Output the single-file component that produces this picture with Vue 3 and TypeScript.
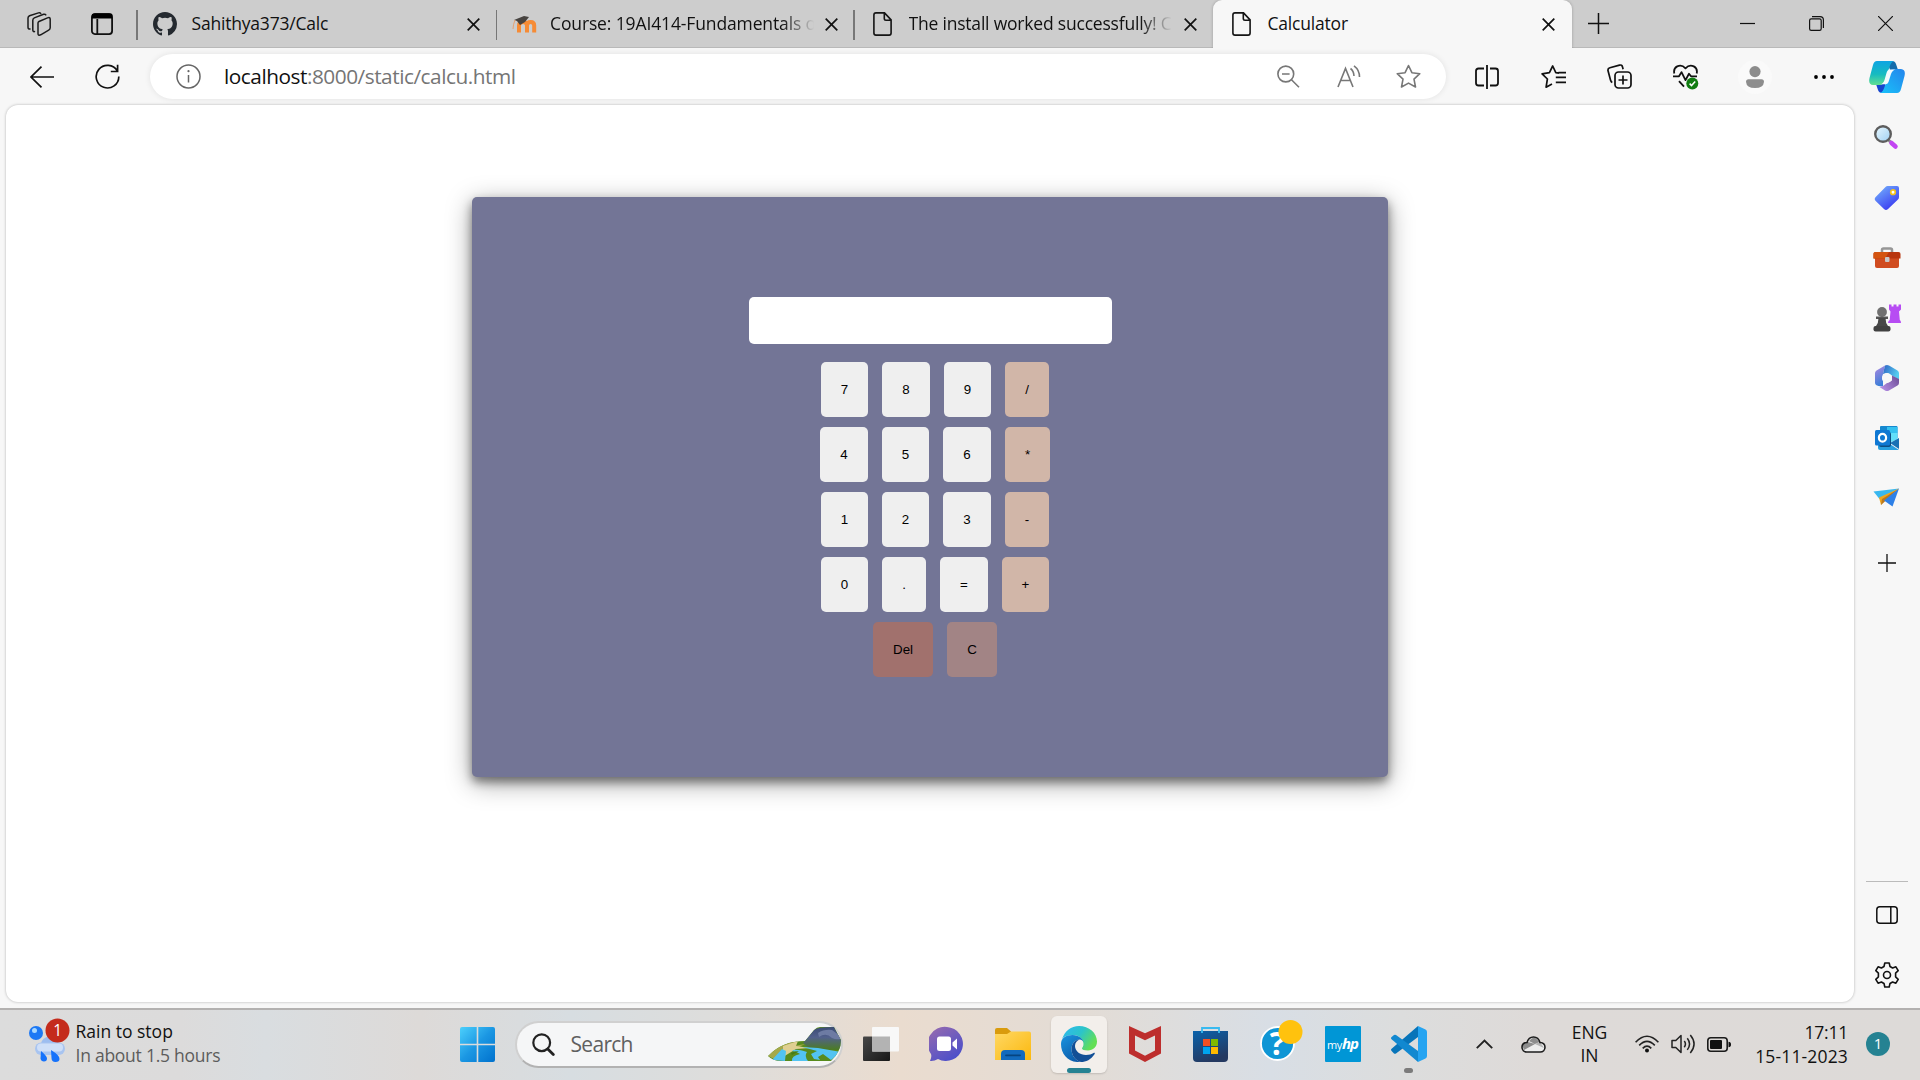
<script setup lang="ts">
import { ref } from 'vue'

type Key = { label: string; kind?: string; size: string }

const display = ref('')
const rows: Key[][] = [
  [{ label: '7', size: 'w47' }, { label: '8', size: 'w48' }, { label: '9', size: 'w47' }, { label: '/', kind: 'op', size: 'w44' }],
  [{ label: '4', size: 'w48' }, { label: '5', size: 'w47' }, { label: '6', size: 'w48' }, { label: '*', kind: 'op', size: 'w45' }],
  [{ label: '1', size: 'w47' }, { label: '2', size: 'w47' }, { label: '3', size: 'w48' }, { label: '-', kind: 'op', size: 'w44' }],
  [{ label: '0', size: 'w47' }, { label: '.', size: 'w44' }, { label: '=', size: 'w48' }, { label: '+', kind: 'op', size: 'w47' }],
  [{ label: 'Del', kind: 'del', size: 'w60' }, { label: 'C', kind: 'clear', size: 'w50' }],
]

function press(label: string) {
  if (label === 'C') display.value = ''
  else if (label === 'Del') display.value = display.value.slice(0, -1)
  else if (label !== '=') display.value += label
}
</script>

<template>
  <div class="screen">
    <header class="tabstrip">
      <svg class="ic workspaces" width="24" height="24" viewBox="0 0 24 24" fill="none" stroke="#1b1b1b" stroke-width="1.5" stroke-linejoin="round" stroke-linecap="round">
        <path d="M12 9.500 20.500 5.900q2.700-1 2.700 1.400v8.500q0 1.600-1.500 2.400l-8 4.600q-2.700 1.200-2.700-1.400V11q0-1 1-1.500z" />
        <path d="M7.500 19.600q-1.700.3-1.700-1.800V8.200q0-1.600 1.500-2.300L16.600 2.300q1.600-.5 2.200.6" />
        <path d="M3 17q-2 .2-2-1.800V6q0-1.500 1.500-2.200L11.500.9q1.500-.4 2.200.5" />
      </svg>
      <svg class="ic tabactions" width="22" height="22" viewBox="0 0 22 22" fill="none" stroke="#111" stroke-width="1.8">
        <rect x=".9" y=".9" width="20.200" height="20.200" rx="3" /><path d="M1 1h20v4.500H1z" fill="#000" stroke="none" /><path d="M6.300 6v15" />
      </svg>
      <i class="sep s1" />
      <div class="tab t1">
        <svg width="24" height="24" viewBox="0 0 16 16"><path fill="#24292f" d="M8 0C3.580 0 0 3.580 0 8c0 3.540 2.290 6.530 5.470 7.590.4.070.55-.17.55-.38 0-.19-.01-.82-.01-1.490-2.010.37-2.530-.49-2.690-.94-.09-.23-.48-.94-.82-1.130-.28-.15-.68-.52-.01-.53.63-.01 1.080.58 1.230.82.72 1.210 1.870.87 2.330.66.070-.52.28-.87.51-1.070-1.780-.2-3.640-.89-3.640-3.950 0-.87.31-1.590.82-2.150-.08-.2-.36-1.020.08-2.120 0 0 .67-.21 2.200.82a7.600 7.600 0 0 1 4 0c1.530-1.040 2.200-.82 2.200-.82.44 1.100.16 1.920.08 2.120.51.56.82 1.270.82 2.150 0 3.070-1.870 3.750-3.650 3.950.29.25.54.73.54 1.480 0 1.070-.01 1.930-.01 2.200 0 .21.15.46.55.38A8 8 0 0 0 16 8c0-4.420-3.580-8-8-8z" /></svg>
        <span class="title a">Sahithya373/Calc</span>
        <svg class="x" width="13" height="13" viewBox="0 0 13 13"><path d="m.7.7 11.600 11.600M12.300.7.7 12.300" stroke="#111" stroke-width="1.700" /></svg>
      </div>
      <i class="sep" />
      <div class="tab t2">
        <svg width="25" height="24" viewBox="0 0 25 24">
          <g fill="none" stroke="#f68b35" stroke-width="4"><path d="M7 20.500v-7q0-3.500 4-3.500t4 3.500v7M15 13.500q0-3.500 3.600-3.500t3.600 3.500v7" /></g>
          <path d="M2 8 12 4l5 1-4 5-5 3-3-4z" fill="#474340" /><path d="M3 8q-2 5-2 9" stroke="#e5a273" fill="none" />
        </svg>
        <span class="title b fade">Course: 19AI414-Fundamentals o</span>
        <svg class="x" width="13" height="13" viewBox="0 0 13 13"><path d="m.7.7 11.600 11.600M12.300.7.7 12.300" stroke="#111" stroke-width="1.700" /></svg>
      </div>
      <i class="sep" />
      <div class="tab t3">
        <svg width="19" height="24" viewBox="0 0 19 24" fill="none" stroke="#151515" stroke-width="1.600"><path d="M3 .9h8.500l6.600 7V21q0 2.100-2 2.100H3q-2.100 0-2.100-2.100V3Q.9.9 3 .9zM11.300 1v5.500q0 1.700 1.700 1.700h5" /></svg>
        <span class="title c fade">The install worked successfully! C</span>
        <svg class="x" width="13" height="13" viewBox="0 0 13 13"><path d="m.7.7 11.600 11.600M12.300.7.7 12.300" stroke="#111" stroke-width="1.700" /></svg>
      </div>
      <div class="tab t4">
        <svg width="19" height="24" viewBox="0 0 19 24" fill="none" stroke="#151515" stroke-width="1.600"><path d="M3 .9h8.500l6.600 7V21q0 2.100-2 2.100H3q-2.100 0-2.100-2.100V3Q.9.9 3 .9zM11.300 1v5.500q0 1.700 1.700 1.700h5" /></svg>
        <span class="title d">Calculator</span>
        <svg class="x" width="13" height="13" viewBox="0 0 13 13"><path d="m.7.7 11.600 11.600M12.300.7.7 12.300" stroke="#111" stroke-width="1.700" /></svg>
      </div>
      <svg class="ic newtab" width="21" height="21" viewBox="0 0 21 21"><path d="M10.500 0v21M0 10.500h21" stroke="#111" stroke-width="1.500" /></svg>
      <div class="winbtns">
        <svg width="15" height="15" viewBox="0 0 15 15"><path d="M0 7.500h15" stroke="#111" stroke-width="1.200" /></svg>
        <svg width="15" height="15" viewBox="0 0 15 15" fill="none" stroke="#111" stroke-width="1.200"><rect x=".6" y="2.800" width="11.600" height="11.600" rx="1.600" /><path d="M3 .6h8q3.400 0 3.400 3.400v8" /></svg>
        <svg width="15" height="15" viewBox="0 0 15 15"><path d="m0 0 15 15M15 0 0 15" stroke="#111" stroke-width="1.200" /></svg>
      </div>
    </header>

    <nav class="toolbar">
      <svg class="back" width="24" height="22" viewBox="0 0 24 22" fill="none" stroke="#111" stroke-width="1.700"><path d="M24 11H1M11.500.6 1 11l10.500 10.400" /></svg>
      <svg class="reload" width="25" height="25" viewBox="0 0 25 25" fill="none" stroke="#111" stroke-width="1.700"><path d="M22.300 7A11.300 11.300 0 1 0 23.800 12.500M22.600.8v6.700h-6.800" /></svg>
      <div class="address">
        <svg width="25" height="25" viewBox="0 0 25 25" fill="none" stroke="#666" stroke-width="1.500"><circle cx="12.500" cy="12.500" r="11.500" /><path d="M12.500 11v7.500" /><circle cx="12.500" cy="7.200" r="1.100" fill="#666" stroke="none" /></svg>
        <span class="url"><b>localhost</b>:8000/static/calcu.html</span>
        <svg class="zoomout" width="23" height="23" viewBox="0 0 23 23" fill="none" stroke="#777" stroke-width="1.600"><circle cx="8.800" cy="9" r="7.900" /><path d="m14.500 14.700 7.500 7.500M5 9h7.600" /></svg>
        <svg class="aloud" width="24" height="24" viewBox="0 0 24 24" fill="none" stroke="#777" stroke-width="1.600"><path d="M1 22 8.500 3.500 16 22M3.700 15.500h9.600M13.500 3.500q3.300 2.500 3.500 7.500M17 .8q5.500 4 5.500 11.200" /></svg>
        <svg width="25" height="25" viewBox="0 0 25 25" fill="none" stroke="#777" stroke-width="1.600" stroke-linejoin="round"><path d="m12.500 1.500 3.400 7.200 7.900 1-5.800 5.400 1.500 7.900-7-3.900-7 3.900L7 15.100 1.200 9.700l7.900-1z" /></svg>
      </div>
      <svg class="split" width="24" height="24" viewBox="0 0 24 24" fill="none" stroke="#111" stroke-width="1.800"><path d="M9 3.500H3.500Q1 3.500 1 6v12q0 2.500 2.500 2.500H9M15 3.500h5.500Q23 3.500 23 6v12q0 2.500-2.500 2.500H15M12 0v24" /></svg>
      <svg class="favs" width="25" height="25" viewBox="0 0 25 25" fill="none" stroke="#111" stroke-width="1.700" stroke-linejoin="round"><path d="M18 9.200l-3.200-.5L11.700 2 8.400 8.700l-7.300 1.100 5.300 5.200-1.300 8.200L11 20.100M14.800 13.300H25M17.500 8.700H25M14.800 18.300H25" /></svg>
      <svg class="coll" width="25" height="25" viewBox="0 0 25 25" fill="none" stroke="#111" stroke-width="1.700"><rect x="8" y="8" width="16" height="16" rx="3.500" /><path d="M16 11.500v9M11.500 16h9M5.300 18.500q-1.300-.6-1.800-2.500L1.100 7q-.7-2.500 1.800-3.200l9.600-2.700q2.400-.6 3 1.800l.6 2.300" /></svg>
      <svg class="heart" width="26" height="26" viewBox="0 0 26 26" fill="none" stroke="#111" stroke-width="1.800" stroke-linejoin="round"><path d="M1.300 9.500Q.2 4.500 4.200 2.400 8.800.3 12.500 4.300 16.200.3 20.800 2.400q4 2.100 2.900 7.100M0 12.300h6l2.500-4.200 4 8 3.500-6.300 2 2.500h6M6 17.200l5 5.500" /><circle cx="19.300" cy="19.500" r="6" fill="#107c10" stroke="none" /><path d="m16.600 19.600 2 2 3.600-4" stroke="#fff" stroke-width="1.500" /></svg>
      <div class="profile"><svg width="18" height="22" viewBox="0 0 18 22" fill="#8d8d8d"><circle cx="9" cy="5.600" r="5.600" /><path d="M2.500 13.200h13Q18 13.200 18 15.700 17.500 22 9 22T0 15.700q0-2.500 2.500-2.500z" /></svg></div>
      <svg class="dots" width="20" height="4" viewBox="0 0 20 4"><circle cx="2" cy="2" r="1.900" /><circle cx="10" cy="2" r="1.900" /><circle cx="18" cy="2" r="1.900" /></svg>
      <svg class="copilot" width="36" height="32" viewBox="0 0 36 32">
        <defs>
          <linearGradient id="cpA" x1="0" y1="0" x2="0" y2="1"><stop offset="0" stop-color="#0fa4e3" /><stop offset=".55" stop-color="#16bbc0" /><stop offset="1" stop-color="#62df91" /></linearGradient>
          <linearGradient id="cpB" x1="1" y1="0" x2="0" y2="1"><stop offset="0" stop-color="#2485ec" /><stop offset="1" stop-color="#19c2fa" /></linearGradient>
        </defs>
        <path d="M18 0h5q3 0 4 3l2 6h-8z" fill="#146cab" /><path d="M18 32h-5q-3 0-4-3l-2-6 9-1z" fill="#1645ce" />
        <path d="M8 0h17q-3 1-4.500 6L16 20q-1.500 4-5 4H4q-5-.5-3.500-7L4 4q1-4 4-4z" fill="url(#cpA)" />
        <path d="M28 32H11q3-1 4.500-6L20 12q1.500-4 5-4h7q5 .5 3.500 7L32 28q-1 4-4 4z" fill="url(#cpB)" />
        <path d="M20.500 8.500h6q-3 .5-4.500 4.500l-2.500 8q-.9 2.300-3 2.300H11q3.300-.3 4.500-4.300l2-7q1-3.500 3-3.500z" fill="#f3fafd" />
      </svg>
    </nav>

    <div class="body">
      <main class="page">
        <section class="card">
          <input v-model="display" class="display" aria-label="Result" readonly />
          <div v-for="(row, r) in rows" :key="r" class="row">
            <button v-for="k in row" :key="k.label" class="key" :class="[k.kind, k.size]" @click="press(k.label)">{{ k.label }}</button>
          </div>
        </section>
      </main>
      <aside class="sidebar">
        <div class="cell"><svg width="28" height="28" viewBox="0 0 28 28"><defs><linearGradient id="sg" x2="1" y2="1"><stop stop-color="#e9f8ff" /><stop offset="1" stop-color="#9fd0f2" /></linearGradient></defs><path d="m15.500 17 3 3" stroke="#8b8b8b" stroke-width="3" /><path d="m18.500 20 4 3.500" stroke="#c245f2" stroke-width="4.500" stroke-linecap="round" /><circle cx="10" cy="11" r="7.800" fill="url(#sg)" stroke="#5d5d5d" stroke-width="2.400" /></svg></div>
        <div class="cell"><svg width="28" height="28" viewBox="0 0 28 28"><defs><linearGradient id="tg" x2=".7" y2="1"><stop stop-color="#78b9fd" /><stop offset="1" stop-color="#3838f1" /></linearGradient></defs><path d="M14.500 2H24q2 0 2 2v9q0 1.500-1 2.500L15 25q-2 2-4 0L2.700 17q-2-2 0-4L12.500 3q1-1 2-1z" fill="url(#tg)" /><circle cx="20" cy="8.200" r="2.300" fill="#fff" stroke="#f5c21b" stroke-width="1.700" /></svg></div>
        <div class="cell"><svg width="28" height="28" viewBox="0 0 28 28"><path d="M9 9V6q0-1.500 1.500-1.500h7Q19 4.500 19 6v3" fill="none" stroke="#969696" stroke-width="2.500" /><path d="M2 14h24v8q0 2-2 2H4q-2 0-2-2z" fill="#d04c20" /><path d="M.5 10q0-2 2-2h23q2 0 2 2v4.500H.5z" fill="#b8360f" /><path d="M.5 9.500q0-1.500 2-1.500H16L12 14.500H.5z" fill="#d4540f" /><rect x="12" y="13" width="4.500" height="5" rx="1" fill="#c8c8c8" /></svg></div>
        <div class="cell"><svg width="28" height="28" viewBox="0 0 28 28"><path d="M16 .5h2.500v2h2v-2h3v2h2v-2H28v5l-2 2 .8 8.500q1.200.7 1.200 3H15q0-2 1.700-3L17.500 7.500l-1.500-2z" fill="#b74cf3" /><circle cx="9" cy="8" r="4.900" fill="#707070" /><path d="M3 12.500h12v2.500H3z" fill="#555" /><path d="M5.500 14h7q0 5 2.500 8H3q2.500-3 2.500-8z" fill="#484848" /><rect x=".5" y="22" width="17" height="5.500" rx="2" fill="#414141" /></svg></div>
        <div class="cell"><svg width="28" height="28" viewBox="0 0 28 28">
          <defs>
            <linearGradient id="mA" x2=".3" y2="1"><stop offset="0" stop-color="#b088e0" /><stop offset="1" stop-color="#3d7fd8" /></linearGradient>
            <linearGradient id="mB" x2="1" y2=".4"><stop offset="0" stop-color="#2f62c4" /><stop offset="1" stop-color="#55cdf0" /></linearGradient>
            <linearGradient id="mC" x1="1" x2="0" y2=".6"><stop offset="0" stop-color="#6b4b93" /><stop offset="1" stop-color="#b08ae0" /></linearGradient>
          </defs>
          <path d="M12 1.500 3.500 6.500Q2 7.500 2 9v10q0 1.500 1.500 2.300 3 1.500 6.500.7V17L9 14l1-4z" fill="url(#mA)" />
          <path d="M12 1.500q2-1 4 0l8.500 5Q26 7.500 26 9v6.500L18 11l-4-2-4 1z" fill="url(#mB)" />
          <path d="M26 15v4q0 1.500-1.500 2.500L16 26.500q-2 1-4 0L6.500 23l3.500-1 4-3 5-2.500v-5z" fill="url(#mC)" />
          <circle cx="14" cy="14" r="5" fill="#f7f7f7" />
        </svg></div>
        <div class="cell"><svg width="28" height="28" viewBox="0 0 28 28"><path d="M7 3q0-1 1-1h15.500q1 0 1 1v11H7z" fill="#1688cf" /><path d="M14 3h10.500v6H14z" fill="#35c1f0" /><path d="M15 9h9.500v6l-6 3-4-2z" fill="#61dff9" /><path d="m26 14-9 5 9 6z" fill="#1871b5" /><path d="M5 18h9l12 8H7q-2 0-2-2z" fill="#289fdf" /><rect x="6" y="8" width="12" height="15" rx="2" fill="#0e4e83" /><rect x="2" y="6" width="15" height="15.500" rx="1.500" fill="#0f78d3" /><ellipse cx="9.500" cy="13.700" rx="3.600" ry="3.900" fill="none" stroke="#fff" stroke-width="2.200" /></svg></div>
        <div class="cell"><svg width="28" height="28" viewBox="0 0 28 28"><path d="M.5 7.500 26 4.500 6.500 15z" fill="#38b7ef" /><path d="M26 4.500 6 13.500l2 7.500 3.500-4z" fill="#efa51d" /><path d="M26 4.500 8 21l1-6z" fill="#b97820" /><path d="M26 4.500 19.500 22.500 11 16.500z" fill="#2e80e7" /></svg></div>
        <div class="cell plus"><svg width="18" height="18" viewBox="0 0 18 18"><path d="M9 0v18M0 9h18" stroke="#111" stroke-width="1.300" /></svg></div>
        <hr class="rule" />
        <div class="cell low"><svg width="22" height="18" viewBox="0 0 22 18" fill="none" stroke="#111" stroke-width="1.500"><rect x=".8" y=".8" width="20.400" height="16.400" rx="3" /><path d="M14.800 1v16" /></svg></div>
        <div class="cell low2"><svg width="26" height="26" viewBox="0 0 26 26" fill="none" stroke="#111" stroke-width="1.600" stroke-linejoin="round"><path d="M10.800 1h4.400l.8 3.500 2.600 1.500 3.300-1.200 2.300 3.900-2.600 2.500v3.600l2.600 2.500-2.300 3.900-3.300-1.200L16 21.500l-.8 3.500h-4.400l-.8-3.500L7.400 20l-3.300 1.200-2.300-3.900 2.600-2.500v-3.600L1.800 8.700l2.300-3.900L7.400 6 10 4.500z" /><circle cx="13" cy="13" r="3.500" /></svg></div>
      </aside>
    </div>

    <footer class="taskbar">
      <div class="weather">
        <svg class="rain" width="48" height="46" viewBox="0 0 48 46">
          <circle cx="9" cy="15" r="7" fill="#1c78f5" /><circle cx="7.500" cy="12.500" r="2.500" fill="#a9d8ff" />
          <ellipse cx="23" cy="26" rx="9" ry="7.500" fill="#9dbdf0" />
          <rect x="8" y="24.500" width="30" height="12.500" rx="6.200" fill="#a8c4f0" />
          <rect x="10" y="25.500" width="26" height="8" rx="4" fill="#cfdff8" />
          <path d="M14 33q6 5 6 7.500 0 3-3 3t-3.500-3zM24 32q9 5.500 8.500 9 0 3-4 3t-4-4z" fill="#1672fb" />
          <circle cx="30.500" cy="12.500" r="12" fill="#c42b1c" />
          <text x="30.800" y="18" text-anchor="middle" font-size="15.500" fill="#fff">1</text>
        </svg>
        <div class="wtext"><span class="w1">Rain to stop</span><span class="w2">In about 1.5 hours</span></div>
      </div>
      <svg class="winlogo" width="35" height="35" viewBox="0 0 35 35"><defs><linearGradient id="win" x2="1" y2="1"><stop stop-color="#4cd0fc" /><stop offset=".5" stop-color="#1b97e3" /><stop offset="1" stop-color="#0071cd" /></linearGradient></defs><path fill="url(#win)" d="M2 0h14.700v16.700H0V2q0-2 2-2zM18.300 0H33q2 0 2 2v14.700H18.300zM0 18.300h16.700V35H2q-2 0-2-2zM18.300 18.300H35V33q0 2-2 2H18.300z" /></svg>
      <div class="search">
        <svg class="mag" width="23" height="23" viewBox="0 0 23 23" fill="none" stroke="#222"><circle cx="9.700" cy="9.700" r="8.400" stroke-width="2.200" /><path d="m15.800 16 5.500 5.500" stroke-width="2.800" stroke-linecap="round" /></svg>
        <span>Search</span>
        <svg class="land" width="73" height="36" viewBox="0 0 73 36">
          <defs><clipPath id="lc"><path d="M0 30Q14 15 37 15L46 4Q49 1 52 1h14l7 13q0 12-10 21H13q-8 0-13-5z" /></clipPath><linearGradient id="mt" x2="0" y2="1"><stop stop-color="#3c4c75" /><stop offset=".45" stop-color="#52618c" /><stop offset="1" stop-color="#4b7c20" /></linearGradient></defs>
          <g clip-path="url(#lc)"><rect width="73" height="36" fill="#588b1d" /><path d="M35 17 46 4q3-3 20-3l7 13v10H43z" fill="url(#mt)" /><path d="M51 11q7-5 13 1 4 2 8 1v-3L64 4q-8-1-14 3z" fill="#6d7ba3" /><path d="M0 30q13-14 30-15l-4 5 11-2-12 6L8 34z" fill="#a5a94b" /><path d="M15 20 30 15l-2 5 14 2-14 1-13 8z" fill="#dfcf91" /><path d="M4 34 14 23l4 2-1 10zM24 35q-1-5 8-7-4-3-8-3 3-3 15 1-3 4 1 9zM34 21l16 1 23 4-10 8-8-6-5 3 2 3-6-1-3-5 6-3z" fill="#52c3f2" /><path d="M23 27q5-2 8-2l-7 4z" fill="#477a16" /></g>
        </svg>
      </div>
      <svg class="tv" width="37" height="35" viewBox="0 0 37 35"><defs><linearGradient id="dk" x2="1" y2="1"><stop stop-color="#474747" /><stop offset="1" stop-color="#181818" /></linearGradient></defs><rect x="0" y="9.500" width="27" height="24.500" rx="1" fill="url(#dk)" /><rect x="9" y="0" width="27" height="24.500" rx="1" fill="#f8f8f8" /><path d="M9 9.500h18v15H9z" fill="#b3b3b3" /></svg>
      <svg class="chat" width="36" height="36" viewBox="0 0 36 36"><defs><linearGradient id="ch" x2=".7" y2="1"><stop stop-color="#9a6cae" /><stop offset="1" stop-color="#4b4fca" /></linearGradient></defs><path d="M18 1a17 17 0 1 1-9 32q-4 2.500-8 2 2-4 1-7A17 17 0 0 1 18 1z" fill="url(#ch)" /><rect x="8" y="10.500" width="14" height="14.500" rx="2.500" fill="#fff" /><path d="m23.500 16.500 4.500-4v11l-4.500-4z" fill="#fff" /></svg>
      <svg class="folder" width="36" height="33" viewBox="0 0 36 33"><defs><linearGradient id="fo" x2="1" y2="1"><stop stop-color="#ffd864" /><stop offset="1" stop-color="#fbb80e" /></linearGradient></defs><path d="M0 2q0-2 2-2h10l4 3.500V12H0z" fill="#d99b0d" /><path d="M0 6h12l4-2.500h18q2 0 2 2V32H0z" fill="url(#fo)" /><path d="M6 32v-6q0-4 4-4h16q4 0 4 4v6z" fill="#126abd" /><path d="M11 27.300h14" stroke="#064480" stroke-width="1.800" stroke-linecap="round" /></svg>
      <div class="edgetile">
        <svg width="36" height="36" viewBox="0 0 36 36"><defs><linearGradient id="e1" x2="1" y2=".5"><stop stop-color="#2eb7f3" /><stop offset=".55" stop-color="#2cc4c9" /><stop offset="1" stop-color="#63df55" /></linearGradient><linearGradient id="e2" x2=".6" y2="1"><stop stop-color="#1a94e0" /><stop offset="1" stop-color="#0c5ba9" /></linearGradient></defs>
          <path d="M1 13C4 5 10 0 18 0C28 0 36 7 36 15.500C36 21 32 24.500 27 24.500C23 24.500 21 23.500 21 22.500C21 21.500 22.500 21 22.500 18C22.500 13 18 9 12 9C7 9 3 10.500 1 13Z" fill="url(#e1)" />
          <path d="M0 18C0 12 5 9 11.500 9C18 9 22.500 13 22.500 17C22.500 15 20.500 13.500 18.500 13.500C14 13.500 10.500 18 10.500 23C10.500 30 15 35 20 36C8 37 0 29 0 18Z" fill="url(#e2)" />
          <path d="M18.500 13.500C16 14.500 14 17 14 20C14 25 19 29 25 29C28 29 31 28 32.500 27C33.800 26.500 34.200 27.200 33.500 28.200C30 33.500 25 36 20 36C15 35 10.500 30 10.500 23C10.500 18 14 13.500 18.500 13.500Z" fill="#124f96" />
        </svg>
        <i class="run" />
      </div>
      <svg class="mcafee" width="32" height="36" viewBox="0 0 32 36"><path fill="#bd2e2d" fill-rule="evenodd" d="M0 0 16 7.300 32 0v27.500L16 36 0 27.500zM6 9.500v15l10 5.200 10-5.200v-15l-10 4.700z" /></svg>
      <svg class="store" width="35" height="35" viewBox="0 0 35 35"><defs><linearGradient id="st" x2=".4" y2="1"><stop stop-color="#0a62ab" /><stop offset="1" stop-color="#243961" /></linearGradient></defs><path d="M0 4h35v27q0 4-4 4H4q-4 0-4-4z" fill="url(#st)" /><path d="M9 6V1h17v5" fill="none" stroke="#38baf0" stroke-width="1.800" /><path d="M10 12h7v7h-7z" fill="#f25022" /><path d="M18 12h7v7h-7z" fill="#7fba00" /><path d="M10 20h7v7h-7z" fill="#00a4ef" /><path d="M18 20h7v7h-7z" fill="#ffb900" /></svg>
      <svg class="help" width="46" height="46" viewBox="0 0 46 46"><circle cx="17.500" cy="23.500" r="16.500" fill="#0f96d5" stroke="#fff" stroke-width="1.800" /><text x="17.500" y="34.500" text-anchor="middle" font-size="32" font-weight="700" fill="#fff">?</text><circle cx="30.500" cy="12" r="12" fill="#ffc20e" /></svg>
      <div class="myhp"><span>my</span><b>hp</b></div>
      <div class="code">
        <svg width="36" height="36" viewBox="0 0 36 36"><path d="M27 0v11L5 27.500q-1 .6-2 0L.6 25q-1.200-1.200 0-2.300z" fill="#0774b9" /><path d="M27 36V25L5 9q-1-.6-2 0L.6 11q-1.200 1.200 0 2.300z" fill="#1188d0" /><path d="m27 0 7.500 3.500Q36 4.300 36 6v24q0 1.700-1.500 2.500L27 36z" fill="#25a4f1" /></svg>
        <i class="run small" />
      </div>
      <svg class="chev" width="17" height="10" viewBox="0 0 17 10" fill="none" stroke="#222" stroke-width="1.900"><path d="m.8 9.200 7.700-7.700 7.700 7.700" /></svg>
      <svg class="cloud" width="25" height="17" viewBox="0 0 25 17"><path d="M6 16Q1 16 1 11.500T6.500 6.500Q8.500 1 13 1t6 5q5.500.5 5.500 5T19 16z" fill="#ededed" /><path d="M3 14 14 8l-7-2q-5 1-5.500 4zM8 5q3-4 6-3.500L18.500 6 14 8z" fill="#8d8d8d" /><path d="M14 8 19 6l4 6z" fill="#b5b5b5" /><path d="M5.800 16C3 16 1 14 1 11.300C1 8.700 3 6.700 6 6.500C7 3 9.500 1 12.500 1C15.500 1 18 3 19 6.500C22 6.700 24 8.700 24 11.300C24 14 22 16 19.200 16Z" fill="none" stroke="#1c1c1c" stroke-width="1.600" /></svg>
      <div class="lang"><span>ENG</span><span>IN</span></div>
      <svg class="wifi" width="24" height="18" viewBox="0 0 24 18" fill="none" stroke="#222" stroke-width="1.600"><path d="M.6 7.300q11.400-12 22.800 0M4.200 10.400q7.800-8 15.600 0M7.700 13.400q4.300-4.500 8.600 0" /><circle cx="12" cy="15.600" r="2" fill="#111" stroke="none" /></svg>
      <svg class="vol" width="25" height="20" viewBox="0 0 25 20" fill="none" stroke="#222" stroke-width="1.500" stroke-linejoin="round"><path d="M1 6.500h3.800L10 1.500v17l-5.200-5H1zM13.300 7q2.300 3 0 6.200M16.300 4.200q4.500 5.800 0 11.700M19.300 1q7.500 9 0 18" /></svg>
      <svg class="bat" width="24" height="15" viewBox="0 0 24 15"><rect x=".8" y=".8" width="19.400" height="13.400" rx="3" fill="none" stroke="#1b1b1b" stroke-width="1.600" /><rect x="3" y="3" width="12" height="9" rx="1" fill="#111" /><path d="M21.500 4.800q2.500 0 2.500 2.700t-2.500 2.700z" fill="#111" /></svg>
      <div class="clock"><span class="k1">17:11</span><span class="k2">15-11-2023</span></div>
      <div class="count">1</div>
    </footer>
  </div>
</template>

<style>
body { overflow: hidden; }
</style>

<style scoped>
.screen { width: 1920px; height: 1080px; display: flex; flex-direction: column; background: #f7f7f7; overflow: hidden; font-family: "Open Sans", "Noto Sans", sans-serif; color: #111; }
svg { display: block; flex: none; }
.tabstrip { height: 48px; flex: none; display: flex; align-items: center; background: #cdcdcd; box-shadow: inset 0 -1px #b9b9b9; }
.workspaces { margin-left: 27px; }
.tabactions { margin-left: 40px; }
.sep { width: 1.500px; height: 30px; margin-top: 2px; background: #777; flex: none; }
.s1 { margin-left: 23px; }
.tab { display: flex; align-items: center; height: 48px; box-sizing: border-box; flex: none; }
.t1 { width: 358px; padding: 0 16px 0 15px; }
.t2 { width: 356px; padding: 0 15px 0 15px; }
.t3 { width: 358px; padding: 0 16px 0 18px; }
.t4 { width: 359px; padding: 0 17px 0 19px; background: #f7f7f7; border-radius: 9px 9px 0 0; box-shadow: 0 0 3px rgba(0, 0, 0, .25); clip-path: inset(0 -4px 0 -4px); }
.title { font-size: 17.500px; line-height: 46px; height: 48px; white-space: nowrap; letter-spacing: -.2px; margin-left: 15px; flex: 1; min-width: 0; }
.b { margin-left: 13px; margin-right: 11px; letter-spacing: -.13px; }
.c, .d { margin-left: 17px; }
.c { margin-right: 12px; }
.fade { -webkit-mask-image: linear-gradient(90deg, #000 calc(100% - 32px), transparent); mask-image: linear-gradient(90deg, #000 calc(100% - 32px), transparent); }
.x { margin-top: 1px; }
.newtab { margin-left: 16px; margin-top: -1px; }
.winbtns { display: flex; gap: 54px; margin-left: auto; margin-right: 27px; margin-top: -1px; }

.toolbar { height: 57px; flex: none; display: flex; align-items: center; box-sizing: border-box; }
.back { margin-left: 30px; }
.reload { margin-left: 41px; }
.address { width: 1296px; height: 45px; margin-left: 30px; border-radius: 23px; background: #fff; box-shadow: 0 0 6px rgba(0, 0, 0, .09); display: flex; align-items: center; box-sizing: border-box; padding: 0 25px 0 26px; flex: none; }
.url { margin-left: 23px; margin-right: auto; font-size: 20.800px; line-height: 44px; height: 46px; color: #757575; white-space: nowrap; letter-spacing: -.47px; }
.url b { color: #111; font-weight: 400; }
.aloud { margin: 0 35px 0 37px; }
.split { margin-left: 29px; }
.favs { margin-left: 42px; }
.coll { margin-left: 41px; }
.heart { margin-left: 41px; }
.profile { width: 34px; height: 34px; border-radius: 50%; background: #fafafa; display: flex; justify-content: center; align-items: center; margin-left: 39px; }
.dots { margin-left: 42px; }
.copilot { margin-left: 35px; }

.body { flex: 1; display: flex; min-height: 0; }
.page { width: 1848px; height: 897px; margin-left: 6px; flex: none; background: #fff; border-radius: 12px; box-shadow: 0 0 3px rgba(0, 0, 0, .28); display: flex; justify-content: center; align-items: flex-start; box-sizing: border-box; padding-top: 92px; }
.card { width: 916px; height: 580px; background: #737596; border-radius: 5px; box-shadow: 0 5px 10px rgba(0, 0, 0, .42), 0 6px 26px rgba(0, 0, 0, .38); display: flex; flex-direction: column; align-items: center; box-sizing: border-box; padding-top: 100px; }
.display { width: 363px; height: 47px; border: 0; padding: 0 8px; box-sizing: border-box; border-radius: 5px; background: #fff; margin-bottom: 18px; outline: 0; margin-left: 1px; }
.row { display: flex; gap: 14px; margin-bottom: 10px; padding-left: 10px; }
.key { height: 55px; border: 0; padding: 0; border-radius: 5px; background: #efefef; color: #000; font: 13.333px "Liberation Sans", Arial, sans-serif; }
.w44 { width: 44px; } .w45 { width: 45px; } .w47 { width: 47px; } .w48 { width: 48px; } .w50 { width: 50px; } .w60 { width: 60px; }
.op { background: #d1b6a8; }
.del { background: #a1716d; }
.clear { background: #a28485; }

.sidebar { flex: 1; display: flex; flex-direction: column; align-items: center; padding-top: 2px; }
.cell { height: 60px; display: flex; align-items: center; justify-content: center; flex: none; }
.cell:nth-child(n + 2):nth-child(-n + 7) { padding-top: 2px; box-sizing: border-box; }
.plus { margin-top: 6px; }
.rule { width: 42px; height: 1px; border: 0; margin: auto 0 0; background: #bbb; flex: none; }
.low { height: 66px; }
.low2 { height: 54px; margin-bottom: 6px; }

.taskbar { height: 72px; flex: none; box-sizing: border-box; border-top: 2px solid #b3b1b0; display: flex; align-items: center; padding-bottom: 2px; background: linear-gradient(90deg, #dcdcdc 0, #dcdbdb 180px, #d9dde0 265px, #dddad8 420px, #d7dde1 570px, #dedddb 730px, #eadccf 900px, #e3dcd5 1080px, #d8dee5 1270px, #dcdddd 1400px, #dedad8 1540px, #dddad8 100%); }
.taskbar > * { flex: none; }
.weather { display: flex; align-items: center; margin-left: 27px; width: 240px; margin-top: -2px; }
.rain { margin-top: -4px; }
.wtext { display: flex; flex-direction: column; font-size: 17.500px; line-height: 24px; white-space: nowrap; letter-spacing: 0; margin-left: .5px; }
.w2 { color: #5c5c5c; letter-spacing: -.25px; }
.winlogo { margin-left: 192.500px; }
.search { margin-left: 20px; width: 328px; height: 47px; box-sizing: border-box; border-radius: 24px; border: 2px solid #d0d0d0; border-bottom-color: #b2b2b2; background: #f5f6f7; display: flex; align-items: center; }
.search span { font-size: 21px; color: #606060; margin-left: 16px; letter-spacing: -.7px; }
.mag { margin-left: 15px; }
.land { margin-left: auto; }
.tv { margin-left: 20px; }
.chat { margin-left: 29px; }
.folder { margin-left: 30px; }
.edgetile { margin-left: 20px; width: 56px; height: 57px; border-radius: 6px; background: #f3efeb; box-shadow: 0 1px 2px rgba(0, 0, 0, .15); display: flex; flex-direction: column; align-items: center; padding-top: 10px; box-sizing: border-box; }
.run { width: 24px; height: 5px; border-radius: 3px; background: #258292; margin-top: 6px; flex: none; }
.small { width: 9px; background: #7b7b7b; }
.mcafee { margin-left: 22px; }
.store { margin-left: 32px; }
.help { margin: -3px 0 0 32px; }
.myhp { margin-left: 19px; width: 36px; height: 36px; background: #0096d6; color: #fff; display: flex; align-items: baseline; justify-content: center; line-height: 34px; font-size: 11px; letter-spacing: -.4px; border-radius: 1px; }
.myhp b { font-size: 15px; font-style: italic; letter-spacing: -1px; }
.code { margin-left: 30px; height: 57px; padding-top: 10px; box-sizing: border-box; display: flex; flex-direction: column; align-items: center; }
.chev { margin-left: 49px; }
.cloud { margin-left: 28px; }
.lang { margin-left: 24px; width: 40px; display: flex; flex-direction: column; align-items: center; font-size: 17.500px; line-height: 23px; }
.wifi { margin-left: 25px; margin-top: -1px; }
.vol { margin-left: 12px; }
.bat { margin-left: 11px; }
.clock { margin-left: auto; display: flex; flex-direction: column; align-items: flex-end; font-size: 17.500px; line-height: 24px; margin-top: -1px; }
.k1 { letter-spacing: -.2px; }
.k2 { letter-spacing: .15px; }
.count { width: 24px; height: 24px; border-radius: 50%; background: #258292; color: #fff; font-size: 15px; line-height: 23px; text-align: center; margin-left: 18px; margin-right: 30px; }
</style>
